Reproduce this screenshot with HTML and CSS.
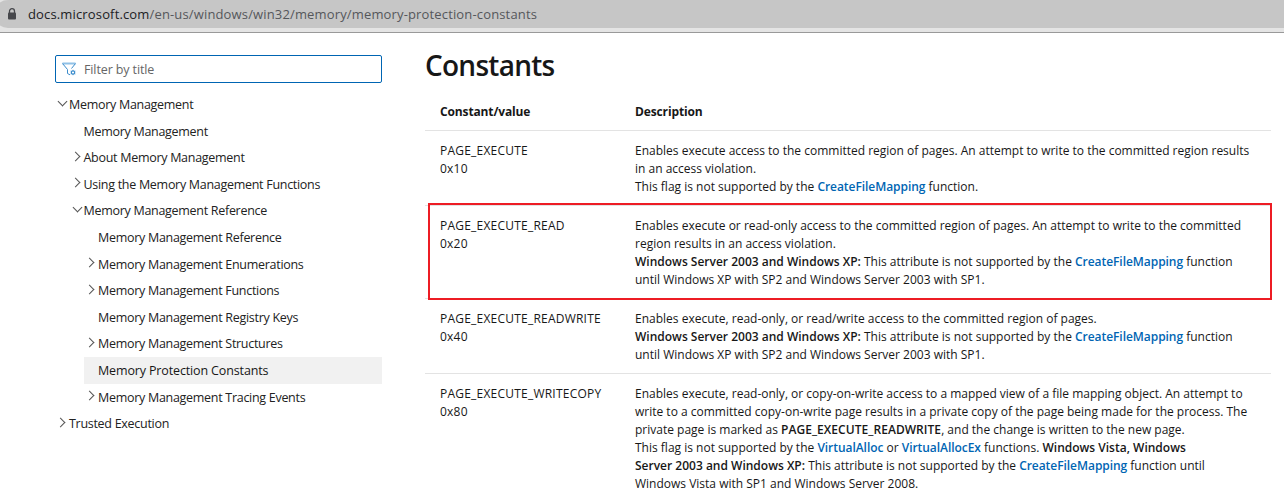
FILE: index.html
```html
<!DOCTYPE html>
<html lang="en">
<head>
<meta charset="utf-8">
<title>Memory Protection Constants</title>
<link rel="stylesheet" href="styles.css">
</head>
<body>
<header class="browser-bar">
  <div class="address">
    <svg class="lock" width="10" height="12" viewBox="0 0 10 12"><path d="M2.5 5V3.2a2.5 2.5 0 0 1 5 0V5" fill="none" stroke="#46474b" stroke-width="1.3"/><rect x="1" y="4.5" width="8" height="7" rx="1" fill="#46474b"/></svg>
    <span class="url"><span class="host">docs.microsoft.com</span>/en-us/windows/win32/memory/memory-protection-constants</span>
  </div>
</header>
<div class="page">
  <nav class="sidebar">
    <label class="filter">
      <svg width="15" height="15" viewBox="0 0 15 15" fill="none" stroke="#3b8ccc"><path d="M.5 1.5H13.5" stroke="#8fc0e6" stroke-width="2"/><path d="M13.5 1.5L9.5 6.5M.5 1.5L5.5 7.5V11.5L8 12.8" /><circle cx="11" cy="10.5" r="1.7" stroke-width="1.2"/><path d="M11 7.8V8.8M11 12.2V13.2M8.6 9.2L9.5 9.7M12.5 11.4L13.4 11.9M8.6 11.9L9.5 11.4M12.5 9.7L13.4 9.2" stroke-width=".8"/></svg>
      <span>Filter by title</span>
    </label>
    <ul class="tree">
      <li class="item open">Memory Management</li>
      <li><ul>
        <li class="item">Memory Management</li>
        <li class="item closed">About Memory Management</li>
        <li class="item closed">Using the Memory Management Functions</li>
        <li class="item open">Memory Management Reference</li>
        <li><ul>
          <li class="item">Memory Management Reference</li>
          <li class="item closed">Memory Management Enumerations</li>
          <li class="item closed">Memory Management Functions</li>
          <li class="item">Memory Management Registry Keys</li>
          <li class="item closed">Memory Management Structures</li>
          <li class="item selected">Memory Protection Constants</li>
          <li class="item closed">Memory Management Tracing Events</li>
        </ul></li>
      </ul></li>
      <li class="item closed">Trusted Execution</li>
    </ul>
  </nav>
  <main class="content">
    <h2>Constants</h2>
    <div class="table">
      <div class="row head"><div>Constant/value</div><div>Description</div></div>
      <div class="row"><div class="name">PAGE_EXECUTE<br>0x10</div>
        <div>Enables execute access to the committed region of pages. An attempt to write to the committed region results<br>in an access violation.<br>This flag is not supported by the <a>CreateFileMapping</a> function.</div></div>
      <div class="row marked"><div class="name">PAGE_EXECUTE_READ<br>0x20</div>
        <div>Enables execute or read-only access to the committed region of pages. An attempt to write to the committed<br>region results in an access violation.<br><b>Windows Server 2003 and Windows XP:</b> This attribute is not supported by the <a>CreateFileMapping</a> function<br>until Windows XP with SP2 and Windows Server 2003 with SP1.</div></div>
      <div class="row"><div class="name">PAGE_EXECUTE_READWRITE<br>0x40</div>
        <div>Enables execute, read-only, or read/write access to the committed region of pages.<br><b>Windows Server 2003 and Windows XP:</b> This attribute is not supported by the <a>CreateFileMapping</a> function<br>until Windows XP with SP2 and Windows Server 2003 with SP1.</div></div>
      <div class="row"><div class="name">PAGE_EXECUTE_WRITECOPY<br>0x80</div>
        <div>Enables execute, read-only, or copy-on-write access to a mapped view of a file mapping object. An attempt to<br>write to a committed copy-on-write page results in a private copy of the page being made for the process. The<br>private page is marked as <b class="const">PAGE_EXECUTE_READWRITE</b>, and the change is written to the new page.<br>This flag is not supported by the <a>VirtualAlloc</a> or <a>VirtualAllocEx</a> functions. <b>Windows Vista, Windows</b><br><b>Server 2003 and Windows XP:</b> This attribute is not supported by the <a>CreateFileMapping</a> function until<br>Windows Vista with SP1 and Windows Server 2008.</div></div>
    </div>
  </main>
</div>
</body>
</html>
```
FILE: styles.css
```css
*, ::before, ::after { box-sizing: border-box; }
body { margin: 0; height: 494px; overflow: hidden; background: #fff; color: #171717; font-family: "Open Sans", "Noto Sans", sans-serif; font-size: 12px; line-height: 18px; }
.browser-bar { height: 33px; background: #e4e4e4; border-bottom: 1px solid #999; }
.address { height: 28px; width: 1310px; margin-left: -6px; padding-left: 13px; display: flex; align-items: center; background: #c6c6c6; border-radius: 14px; }
.lock { margin-right: 11px; }
.url { font-size: 13px; color: #55575b; white-space: nowrap; letter-spacing: 0.15px; }
.host { color: #202124; }
.page { display: flex; }
.sidebar { width: 382px; padding: 22px 0 0 55px; flex: none; }
.filter { display: flex; align-items: center; gap: 7px; height: 28px; border: 1px solid #0065b3; border-radius: 2px; padding-left: 6px; font-size: 12.5px; color: #666; letter-spacing: -0.12px; }
.filter span { padding-top: 2px; }
.tree, .tree ul { list-style: none; margin: 0; padding: 0; }
.tree { padding: 8px 0 0 0; font-size: 12.5px; letter-spacing: -0.29px; color: #222; }
.tree ul { padding-left: 14.5px; }
.item { height: 26.6px; line-height: 24px; padding: 1.6px 0 0 14px; white-space: nowrap; display: flex; align-items: center; }
.open::before, .closed::before { content: ""; width: 7px; height: 7px; border: solid #555; border-width: 0 1px 1px 0; flex: none; margin: -8px 3px 0 -10px; transform: rotate(45deg); }
.closed::before { margin: -4px 5px 0 -12px; transform: rotate(-45deg); }
.selected { background: #f1f1f1; color: #171717; font-weight: 500; letter-spacing: -0.14px; }
.content { width: 846px; margin-left: 43px; }
h2 { margin: 0; padding-top: 13px; height: 60px; font-size: 28px; line-height: 38px; font-weight: 600; letter-spacing: -0.74px; }
.row { display: grid; grid-template-columns: 195px 651px; padding: 11px 0 9px; border-bottom: 1px solid #e3e3e3; white-space: nowrap; }
.row > div { padding-left: 15px; letter-spacing: 0; }
.row > .name { letter-spacing: 0.22px; }
.row.head { font-weight: 700; height: 38px; padding-top: 10px; }
.row.head > div { letter-spacing: -0.13px; }
.marked { position: relative; }
.marked::after { content: ""; position: absolute; left: 3px; top: -3px; width: 844px; height: 97px; border: 2px solid #ed1c24; }
b { font-weight: 600; }
.const { letter-spacing: 0.05px; }
a { font-weight: 600; color: #0065b3; letter-spacing: -0.05px; }
```
